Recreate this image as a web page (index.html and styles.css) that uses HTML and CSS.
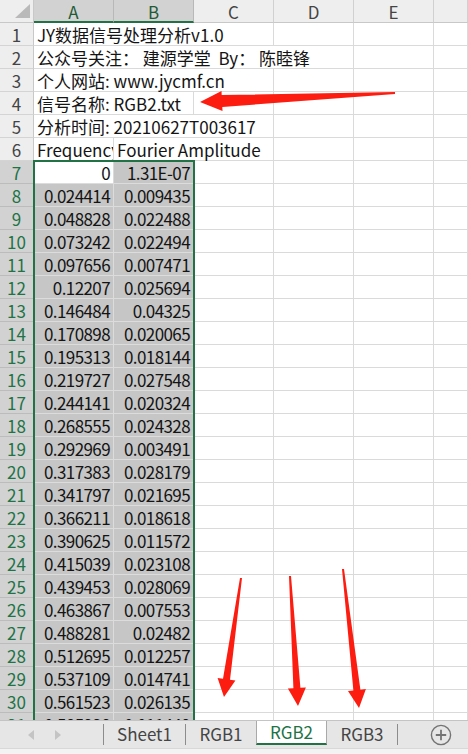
FILE: index.html
```html
<!DOCTYPE html>
<html lang="zh">
<head>
<meta charset="utf-8">
<title>JY数据信号处理分析</title>
<link rel="stylesheet" href="styles.css">
</head>
<body>
<div class="sheet">
  <div class="corner"><span class="tri"></span></div>
  <div class="ch hl">A</div><div class="ch hl">B</div><div class="ch">C</div><div class="ch">D</div><div class="ch">E</div><div class="ch"></div>

  <div class="rh">1</div><div class="c t span3">JY数据信号处理分析v1.0</div><div class="c"></div><div class="c"></div><div class="c"></div>
  <div class="rh">2</div><div class="c t span4">公众号关注：&nbsp;建源学堂&nbsp;&nbsp;By：&nbsp;陈睦锋</div><div class="c"></div><div class="c"></div>
  <div class="rh">3</div><div class="c t span3">个人网站: www.jycmf.cn</div><div class="c"></div><div class="c"></div><div class="c"></div>
  <div class="rh">4</div><div class="c t span2">信号名称: RGB2.txt</div><div class="c"></div><div class="c"></div><div class="c"></div><div class="c"></div>
  <div class="rh">5</div><div class="c t span3">分析时间: 20210627T003617</div><div class="c"></div><div class="c"></div><div class="c"></div>
  <div class="rh">6</div><div class="c t clip">Frequency</div><div class="c t span2">Fourier Amplitude</div><div class="c"></div><div class="c"></div><div class="c"></div>

  <div class="rh hl">7</div><div class="c n act">0</div><div class="c n s">1.31E-07</div><div class="c"></div><div class="c"></div><div class="c"></div><div class="c"></div>
  <div class="rh hl">8</div><div class="c n s">0.024414</div><div class="c n s">0.009435</div><div class="c"></div><div class="c"></div><div class="c"></div><div class="c"></div>
  <div class="rh hl">9</div><div class="c n s">0.048828</div><div class="c n s">0.022488</div><div class="c"></div><div class="c"></div><div class="c"></div><div class="c"></div>
  <div class="rh hl">10</div><div class="c n s">0.073242</div><div class="c n s">0.022494</div><div class="c"></div><div class="c"></div><div class="c"></div><div class="c"></div>
  <div class="rh hl">11</div><div class="c n s">0.097656</div><div class="c n s">0.007471</div><div class="c"></div><div class="c"></div><div class="c"></div><div class="c"></div>
  <div class="rh hl">12</div><div class="c n s">0.12207</div><div class="c n s">0.025694</div><div class="c"></div><div class="c"></div><div class="c"></div><div class="c"></div>
  <div class="rh hl">13</div><div class="c n s">0.146484</div><div class="c n s">0.04325</div><div class="c"></div><div class="c"></div><div class="c"></div><div class="c"></div>
  <div class="rh hl">14</div><div class="c n s">0.170898</div><div class="c n s">0.020065</div><div class="c"></div><div class="c"></div><div class="c"></div><div class="c"></div>
  <div class="rh hl">15</div><div class="c n s">0.195313</div><div class="c n s">0.018144</div><div class="c"></div><div class="c"></div><div class="c"></div><div class="c"></div>
  <div class="rh hl">16</div><div class="c n s">0.219727</div><div class="c n s">0.027548</div><div class="c"></div><div class="c"></div><div class="c"></div><div class="c"></div>
  <div class="rh hl">17</div><div class="c n s">0.244141</div><div class="c n s">0.020324</div><div class="c"></div><div class="c"></div><div class="c"></div><div class="c"></div>
  <div class="rh hl">18</div><div class="c n s">0.268555</div><div class="c n s">0.024328</div><div class="c"></div><div class="c"></div><div class="c"></div><div class="c"></div>
  <div class="rh hl">19</div><div class="c n s">0.292969</div><div class="c n s">0.003491</div><div class="c"></div><div class="c"></div><div class="c"></div><div class="c"></div>
  <div class="rh hl">20</div><div class="c n s">0.317383</div><div class="c n s">0.028179</div><div class="c"></div><div class="c"></div><div class="c"></div><div class="c"></div>
  <div class="rh hl">21</div><div class="c n s">0.341797</div><div class="c n s">0.021695</div><div class="c"></div><div class="c"></div><div class="c"></div><div class="c"></div>
  <div class="rh hl">22</div><div class="c n s">0.366211</div><div class="c n s">0.018618</div><div class="c"></div><div class="c"></div><div class="c"></div><div class="c"></div>
  <div class="rh hl">23</div><div class="c n s">0.390625</div><div class="c n s">0.011572</div><div class="c"></div><div class="c"></div><div class="c"></div><div class="c"></div>
  <div class="rh hl">24</div><div class="c n s">0.415039</div><div class="c n s">0.023108</div><div class="c"></div><div class="c"></div><div class="c"></div><div class="c"></div>
  <div class="rh hl">25</div><div class="c n s">0.439453</div><div class="c n s">0.028069</div><div class="c"></div><div class="c"></div><div class="c"></div><div class="c"></div>
  <div class="rh hl">26</div><div class="c n s">0.463867</div><div class="c n s">0.007553</div><div class="c"></div><div class="c"></div><div class="c"></div><div class="c"></div>
  <div class="rh hl">27</div><div class="c n s">0.488281</div><div class="c n s">0.02482</div><div class="c"></div><div class="c"></div><div class="c"></div><div class="c"></div>
  <div class="rh hl">28</div><div class="c n s">0.512695</div><div class="c n s">0.012257</div><div class="c"></div><div class="c"></div><div class="c"></div><div class="c"></div>
  <div class="rh hl">29</div><div class="c n s">0.537109</div><div class="c n s">0.014741</div><div class="c"></div><div class="c"></div><div class="c"></div><div class="c"></div>
  <div class="rh hl">30</div><div class="c n s">0.561523</div><div class="c n s">0.026135</div><div class="c"></div><div class="c"></div><div class="c"></div><div class="c"></div>
  <div class="rh hl">31</div><div class="c n s">0.585938</div><div class="c n s">0.011449</div><div class="c"></div><div class="c"></div><div class="c"></div><div class="c"></div>

  <div class="selbox"></div>
</div>

<div class="tabbar">
  <div class="nav">
    <span class="arr left"></span>
    <span class="arr right"></span>
  </div>
  <span class="sep"></span>
  <div class="tab w81">Sheet1</div>
  <span class="sep"></span>
  <div class="tab w70">RGB1</div>
  <div class="tab active">RGB2</div>
  <div class="tab w70">RGB3</div>
  <span class="sep"></span>
  <div class="addwrap">
    <svg class="add" width="22" height="22" viewBox="0 0 22 22">
      <circle cx="11" cy="11" r="9.6" fill="none" stroke="#737373" stroke-width="1.4"/>
      <path d="M11 5.8V16.2M5.8 11H16.2" stroke="#737373" stroke-width="1.8"/>
    </svg>
  </div>
</div>
<div class="bottomstrip"></div>

<svg class="marks" width="468" height="754" viewBox="0 0 468 754">
  <polygon fill="#fd1c10" points="395,92 221.7,95 221.5,91 200,102 222.5,111 222.3,107 395,94"/>
  <polygon fill="#fd1c10" points="240,577.9 223,678.7 217.6,677.9 224,697 235.4,680.5 230,679.7 242,578.1"/>
  <polygon fill="#fd1c10" points="289,576 293.4,688.2 287.9,688.6 298,706 305.9,687.4 300.4,687.8 291,575.9"/>
  <polygon fill="#fd1c10" points="342,569.1 353.4,690.5 348,691.1 359,708 365.9,689.1 360.4,689.7 344,568.9"/>
</svg>
</body>
</html>
```

FILE: styles.css
```css
* {
  box-sizing: border-box;
}

html, body {
  margin: 0;
  padding: 0;
}

body {
  width: 468px;
  height: 754px;
  overflow: hidden;
  position: relative;
  background: #ffffff;
  font-family: "Noto Sans CJK SC", "Noto Sans", sans-serif;
}

.sheet {
  position: relative;
  height: 720px;
  overflow: hidden;
  display: grid;
  grid-template-columns: 34px repeat(5, 80px) 34px;
  grid-auto-rows: 23px;
  font-size: 17px;
}

.corner {
  position: relative;
  background: #eeeeee;
  border-right: 1px solid #c8c8c8;
  border-bottom: 1px solid #c8c8c8;
}

.tri {
  position: absolute;
  right: 3px;
  bottom: 4px;
  width: 0;
  height: 0;
  border-style: solid;
  border-width: 0 0 14px 15px;
  border-color: transparent transparent #b9b9b9 transparent;
}

.ch {
  background: #eeeeee;
  color: #444444;
  text-align: center;
  padding-top: 2px;
  line-height: 20px;
  border-right: 1px solid #d0d0d0;
  border-bottom: 1px solid #c8c8c8;
}

.ch.hl {
  background: #d2d2d2;
  color: #1e5b37;
  border-bottom: 2px solid #217346;
  border-right-color: #b8b8b8;
}

.rh {
  background: #eeeeee;
  color: #444444;
  text-align: center;
  padding-top: 1px;
  line-height: 21px;
  border-right: 1px solid #c8c8c8;
  border-bottom: 1px solid #d4d4d4;
}

.rh.hl {
  background: #d2d2d2;
  color: #217346;
  border-bottom-color: #bcbcbc;
}

.c {
  border-right: 1px solid #dadada;
  border-bottom: 1px solid #dadada;
  white-space: nowrap;
  padding: 1px 3px 0;
  line-height: 21px;
  color: #141414;
}

.t {
  padding-left: 3px;
}

.clip {
  overflow: hidden;
}

.span2 {
  grid-column: span 2;
}

.span3 {
  grid-column: span 3;
}

.span4 {
  grid-column: span 4;
}

.n {
  text-align: right;
  letter-spacing: -0.6px;
}

.s {
  background: #c6c6c6;
  border-color: #dcdcdc;
}

.act {
  background: #ffffff;
  border-bottom-color: #dcdcdc;
}

.selbox {
  position: absolute;
  grid-column: 2 / 4;
  grid-row: 8 / 33;
  top: -1px;
  left: -1px;
  right: -1px;
  bottom: 0;
  border: 2px solid #217346;
  pointer-events: none;
}

.tabbar {
  height: 28px;
  display: flex;
  align-items: stretch;
  background: #e6e6e6;
  border-top: 1px solid #c4c4c4;
  font-size: 17px;
  color: #444444;
}

.nav {
  width: 103px;
  display: flex;
  align-items: center;
  padding-left: 28px;
  gap: 21px;
}

.arr {
  width: 0;
  height: 0;
  border-style: solid;
}

.arr.left {
  border-width: 5px 6px 5px 0;
  border-color: transparent #c4c4c4 transparent transparent;
}

.arr.right {
  border-width: 5px 0 5px 6px;
  border-color: transparent transparent transparent #c4c4c4;
}

.sep {
  width: 1px;
  background: #8c8c8c;
  margin: 3px 0 3px;
}

.tab {
  display: flex;
  align-items: center;
  justify-content: center;
  line-height: 20px;
  padding-bottom: 2px;
}

.w81 {
  width: 81px;
}

.w70 {
  width: 70px;
}

.tab.active {
  width: 71px;
  background: #ffffff;
  color: #217346;
  border-left: 1px solid #a9a9a9;
  border-right: 1px solid #a9a9a9;
  border-bottom: 2px solid #217346;
  margin-bottom: 3px;
  padding-bottom: 0;
}

.addwrap {
  flex: 1;
  display: flex;
  align-items: center;
  justify-content: flex-end;
  padding-right: 16px;
}

.bottomstrip {
  height: 6px;
  background: #f3f3f3;
  border-top: 1px solid #d8d8d8;
}

.marks {
  position: absolute;
  top: 0;
  left: 0;
  pointer-events: none;
}
```
